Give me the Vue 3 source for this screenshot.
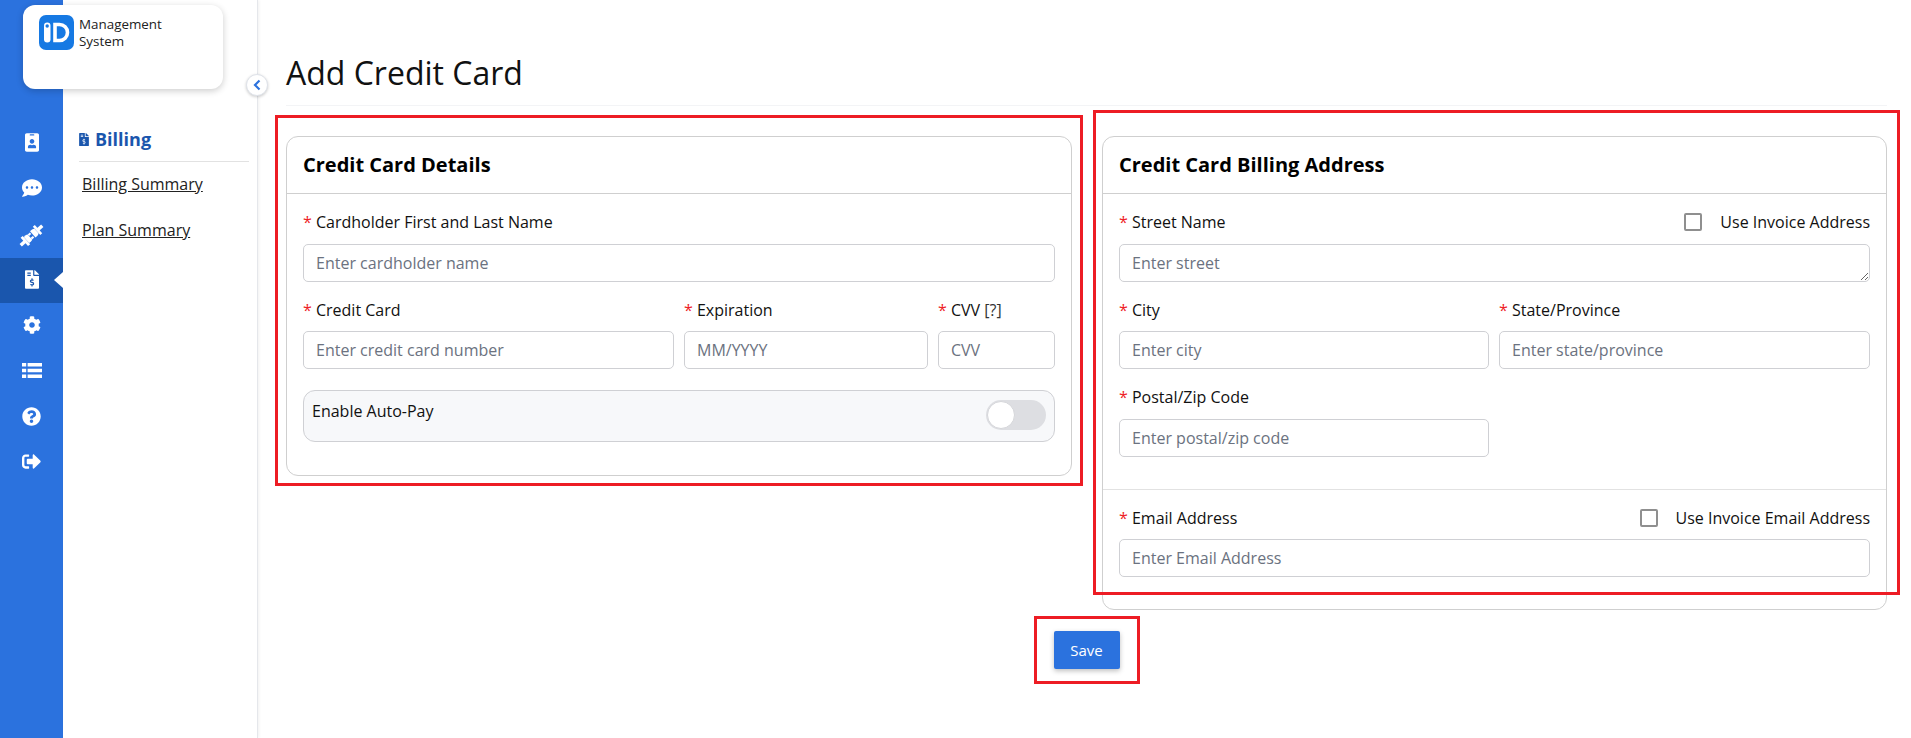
<script setup>
const fileDollar = 'M377 105L279.1 7c-4.5-4.5-10.6-7-17-7H256v128h128v-6.1c0-6.3-2.5-12.4-7-16.9zm-153 31V0H24C10.7 0 0 10.7 0 24v464c0 13.3 10.7 24 24 24h336c13.3 0 24-10.7 24-24V160H248c-13.2 0-24-10.8-24-24zM64 72c0-4.42 3.58-8 8-8h80c4.42 0 8 3.58 8 8v16c0 4.42-3.58 8-8 8H72c-4.42 0-8-3.58-8-8V72zm0 80v-16c0-4.42 3.58-8 8-8h80c4.42 0 8 3.58 8 8v16c0 4.42-3.58 8-8 8H72c-4.42 0-8-3.58-8-8zm144 263.88V440c0 4.42-3.58 8-8 8h-16c-4.42 0-8-3.58-8-8v-24.29c-11.29-.58-22.27-4.52-31.37-11.35-3.9-2.93-4.1-8.77-.57-12.14l11.75-11.21c2.77-2.64 6.89-2.76 10.13-.73 3.87 2.42 8.26 3.72 12.82 3.72h28.11c6.5 0 11.8-5.92 11.8-13.19 0-5.95-3.61-11.19-8.77-12.73l-45-13.5c-18.59-5.58-31.58-23.42-31.58-43.39 0-24.52 19.05-44.44 42.67-45.07V232c0-4.42 3.58-8 8-8h16c4.42 0 8 3.58 8 8v24.29c11.29.58 22.27 4.51 31.37 11.35 3.9 2.93 4.1 8.77.57 12.14l-11.75 11.21c-2.77 2.64-6.89 2.76-10.13.73-3.87-2.43-8.26-3.72-12.82-3.72h-28.11c-6.5 0-11.8 5.92-11.8 13.19 0 5.95 3.61 11.19 8.77 12.73l45 13.5c18.59 5.58 31.58 23.42 31.58 43.39 0 24.53-19.05 44.44-42.67 45.07z'

const navIcons = [
  { name: 'contacts', w: 14, h: 19, box: '0 0 384 512', d: 'M336 0H48C21.5 0 0 21.5 0 48v416c0 26.5 21.5 48 48 48h288c26.5 0 48-21.5 48-48V48c0-26.5-21.5-48-48-48zM144 32h96c8.8 0 16 7.2 16 16s-7.2 16-16 16h-96c-8.8 0-16-7.2-16-16s7.2-16 16-16zm48 128c35.3 0 64 28.7 64 64s-28.7 64-64 64-64-28.7-64-64 28.7-64 64-64zm112 236.8c0 10.6-10 19.2-22.4 19.2H102.4C90 416 80 407.4 80 396.8v-19.2c0-31.8 30.1-57.6 67.2-57.6h5c12.3 5.1 25.7 8 39.8 8s27.6-2.9 39.8-8h5c37.1 0 67.2 25.8 67.2 57.6v19.2z' },
  { name: 'messages', w: 20, h: 20, box: '0 0 512 512', d: 'M256 32C114.6 32 0 125.1 0 240c0 49.6 21.4 95 57 130.7C44.5 421.1 2.7 466 2.2 466.5c-2.2 2.3-2.8 5.7-1.5 8.7S4.8 480 8 480c66.3 0 116-31.8 140.6-51.4 32.7 12.3 69 19.4 107.4 19.4 141.4 0 256-93.1 256-208S397.4 32 256 32zM128 272c-17.7 0-32-14.3-32-32s14.3-32 32-32 32 14.3 32 32-14.3 32-32 32zm128 0c-17.7 0-32-14.3-32-32s14.3-32 32-32 32 14.3 32 32-14.3 32-32 32zm128 0c-17.7 0-32-14.3-32-32s14.3-32 32-32 32 14.3 32 32-14.3 32-32 32z' },
  { name: 'integrations', w: 29, h: 29, box: '0 0 24 24', plug: true },
  { name: 'billing', w: 14, h: 19, box: '0 0 384 512', d: fileDollar, active: true },
  { name: 'settings', w: 18, h: 18, box: '0 0 512 512', d: 'M487.4 315.7l-42.6-24.6c4.3-23.2 4.3-47 0-70.2l42.6-24.6c4.9-2.8 7.1-8.6 5.5-14-11.1-35.6-30-67.8-54.7-94.6-3.8-4.1-10-5.1-14.8-2.3L380.8 110c-17.9-15.4-38.5-27.3-60.8-35.1V25.8c0-5.6-3.9-10.5-9.4-11.7-36.7-8.2-74.3-7.8-109.2 0-5.5 1.2-9.4 6.1-9.4 11.7V75c-22.2 7.9-42.8 19.8-60.8 35.1L88.7 85.5c-4.9-2.8-11-1.9-14.8 2.3-24.7 26.7-43.6 58.9-54.7 94.6-1.7 5.4.6 11.2 5.5 14L67.3 221c-4.3 23.2-4.3 47 0 70.2l-42.6 24.6c-4.9 2.8-7.1 8.6-5.5 14 11.1 35.6 30 67.8 54.7 94.6 3.8 4.1 10 5.1 14.8 2.3l42.6-24.6c17.9 15.4 38.5 27.3 60.8 35.1v49.2c0 5.6 3.9 10.5 9.4 11.7 36.7 8.2 74.3 7.8 109.2 0 5.5-1.2 9.4-6.1 9.4-11.7v-49.2c22.2-7.9 42.8-19.8 60.8-35.1l42.6 24.6c4.9 2.8 11 1.9 14.8-2.3 24.7-26.7 43.6-58.9 54.7-94.6 1.5-5.5-.7-11.3-5.6-14.1zM256 336c-44.1 0-80-35.9-80-80s35.9-80 80-80 80 35.9 80 80-35.9 80-80 80z' },
  { name: 'lists', w: 20, h: 15, box: '0 0 20 15', d: 'M0 0H4.2V3.4H0zM5.6 0H20V3.4H5.6zM0 5.8H4.2V9.2H0zM5.6 5.8H20V9.2H5.6zM0 11.6H4.2V15H0zM5.6 11.6H20V15H5.6z' },
  { name: 'help', w: 19, h: 19, box: '0 0 512 512', d: 'M504 256c0 136.997-111.043 248-248 248S8 392.997 8 256C8 119.083 119.043 8 256 8s248 111.083 248 248zM262.655 90c-54.497 0-89.255 22.957-116.549 63.758-3.536 5.286-2.353 12.415 2.715 16.258l34.699 26.31c5.205 3.947 12.621 3.008 16.665-2.122 17.864-22.658 30.113-35.797 57.303-35.797 20.429 0 45.698 13.148 45.698 32.958 0 14.976-12.363 22.667-32.534 33.976C247.128 238.528 216 254.941 216 296v4c0 6.627 5.373 12 12 12h56c6.627 0 12-5.373 12-12v-1.333c0-28.462 83.186-29.647 83.186-106.667 0-58.002-60.165-102-116.531-102zM256 338c-25.365 0-46 20.635-46 46 0 25.364 20.635 46 46 46s46-20.636 46-46c0-25.365-20.635-46-46-46z' },
  { name: 'logout', w: 19, h: 19, box: '0 0 512 512', d: 'M497 273L329 441c-15 15-41 4.5-41-17v-96H152c-13.3 0-24-10.7-24-24v-96c0-13.3 10.7-24 24-24h136V88c0-21.4 25.9-32 41-17l168 168c9.3 9.4 9.3 24.6 0 34zM192 436v-40c0-6.6-5.4-12-12-12H96c-17.7 0-32-14.3-32-32V160c0-17.7 14.3-32 32-32h84c6.6 0 12-5.4 12-12V76c0-6.6-5.4-12-12-12H96c-53 0-96 43-96 96v192c0 53 43 96 96 96h84c6.6 0 12-5.4 12-12z' }
]
</script>

<template>
  <div class="page">
    <aside class="rail">
      <div v-for="item in navIcons" :key="item.name" class="rail-item" :class="{ active: item.active }">
        <svg :class="{ plug: item.plug }" :viewBox="item.box" :width="item.w" :height="item.h" fill="currentColor">
          <g v-if="item.plug" transform="rotate(-42 12 12)">
            <rect x="0" y="10.6" width="5" height="2.8" />
            <rect x="4" y="7.4" width="2.4" height="9.2" />
            <path d="M6.4 8.6h2.2a3 3 0 0 1 1.6.6v5.6a3 3 0 0 1-1.6.6H6.4z" />
            <rect x="10.2" y="9.3" width="2.4" height="1.7" />
            <rect x="10.2" y="13" width="2.4" height="1.7" />
            <path d="M13.4 8.6h2.2a3.4 3.4 0 0 1 2 .8v5.2a3.4 3.4 0 0 1-2 .8h-2.2z" />
            <rect x="17.6" y="7.4" width="2.2" height="9.2" />
            <rect x="19" y="10.6" width="5" height="2.8" />
          </g>
          <path v-else :d="item.d" />
        </svg>
      </div>
    </aside>

    <nav class="subnav">
      <div class="subnav-head">
        <svg viewBox="0 0 384 512" width="10" height="13" fill="currentColor"><path :d="fileDollar" /></svg>
        <span>Billing</span>
      </div>
      <a class="subnav-link">Billing Summary</a>
      <a class="subnav-link">Plan Summary</a>
    </nav>

    <main class="main">
      <h1 class="title">Add Credit Card</h1>

      <div class="cards">
        <section class="card">
          <h2 class="card-head">Credit Card Details</h2>
          <div class="card-body">
            <div class="field">
              <label class="label"><span><i>*</i> Cardholder First and Last Name</span></label>
              <input class="input" placeholder="Enter cardholder name" />
            </div>
            <div class="row row-card row-mid">
              <div class="field">
                <label class="label"><span><i>*</i> Credit Card</span></label>
                <input class="input" placeholder="Enter credit card number" />
              </div>
              <div class="field">
                <label class="label"><span><i>*</i> Expiration</span></label>
                <input class="input" placeholder="MM/YYYY" />
              </div>
              <div class="field">
                <label class="label"><span><i>*</i> CVV <b class="hint">[?]</b></span></label>
                <input class="input" placeholder="CVV" />
              </div>
            </div>
            <div class="autopay">
              <span class="autopay-text">Enable Auto-Pay</span>
              <span class="toggle"><span class="knob"></span></span>
            </div>
          </div>
        </section>

        <section class="card">
          <h2 class="card-head">Credit Card Billing Address</h2>
          <div class="card-body address">
            <div class="field">
              <label class="label">
                <span><i>*</i> Street Name</span>
                <span class="check"><span class="box"></span>Use Invoice Address</span>
              </label>
              <textarea class="input area" rows="1" placeholder="Enter street"></textarea>
            </div>
            <div class="row row-half row-mid">
              <div class="field">
                <label class="label"><span><i>*</i> City</span></label>
                <input class="input" placeholder="Enter city" />
              </div>
              <div class="field">
                <label class="label"><span><i>*</i> State/Province</span></label>
                <input class="input" placeholder="Enter state/province" />
              </div>
            </div>
            <div class="row row-half">
              <div class="field">
                <label class="label"><span><i>*</i> Postal/Zip Code</span></label>
                <input class="input" placeholder="Enter postal/zip code" />
              </div>
            </div>
          </div>
          <div class="card-body email">
            <div class="field">
              <label class="label">
                <span><i>*</i> Email Address</span>
                <span class="check"><span class="box"></span>Use Invoice Email Address</span>
              </label>
              <input class="input" placeholder="Enter Email Address" />
            </div>
          </div>
        </section>
      </div>

      <div class="actions">
        <button class="save" type="button">Save</button>
      </div>
    </main>

    <div class="logo-card">
      <svg class="logo" viewBox="0 0 35 35" width="35" height="35">
        <rect width="35" height="35" rx="7" fill="#1679e3" />
        <rect x="5" y="7.5" width="6.5" height="20" rx="3.25" fill="#fff" />
        <circle cx="8.2" cy="11" r="1.7" fill="#1679e3" />
        <path d="M16 9.5h4.5a8 8 0 0 1 0 16H16z" fill="none" stroke="#fff" stroke-width="3.6" />
      </svg>
      <span class="logo-text">Management<br />System</span>
    </div>

    <button class="collapse" type="button" aria-label="Collapse">
      <svg viewBox="0 0 10 12" width="10" height="12" fill="none" stroke="#2b72de" stroke-width="2.2"><path d="M7.5 1.5 3 6l4.5 4.5" /></svg>
    </button>

    <div class="mark mark-a"></div>
    <div class="mark mark-b"></div>
    <div class="mark mark-c"></div>
  </div>
</template>

<style>
html, body { margin: 0; background: #fff; overflow: hidden; }
</style>

<style scoped>
.page {
  position: relative;
  display: flex;
  width: 1911px;
  height: 738px;
  overflow: hidden;
  background: #fff;
  color: #111827;
  font-family: "Open Sans", "Noto Sans", sans-serif;
  font-size: 14px;
}
.rail {
  flex: 0 0 63px;
  padding-top: 121px;
  box-sizing: border-box;
  background: #2b72de;
  color: #fff;
}
.rail-item {
  position: relative;
  display: flex;
  align-items: center;
  justify-content: center;
  height: 45.6px;
  padding-bottom: 2px;
  box-sizing: border-box;
}
.rail-item.active { background: #1a56ad; }
.rail-item.active::after {
  content: "";
  position: absolute;
  right: 0;
  top: 14px;
  border-style: solid;
  border-width: 8px 9px 8px 0;
  border-color: transparent #fff transparent transparent;
}
.plug { margin-top: 4px; }
.subnav {
  flex: 0 0 195px;
  box-sizing: border-box;
  padding: 125px 8px 0 16px;
  border-right: 1px solid #e5e7eb;
  box-shadow: 1px 0 3px rgba(0, 0, 0, 0.06);
}
.subnav-head {
  display: flex;
  align-items: center;
  gap: 6px;
  height: 37px;
  padding-bottom: 8px;
  box-sizing: border-box;
  border-bottom: 1px solid #e2e2e2;
  color: #1a56ad;
  font-size: 18px;
  font-weight: 700;
}
.subnav-link {
  display: block;
  height: 46px;
  line-height: 44px;
  padding-left: 3px;
  color: #222;
  font-size: 16px;
  text-decoration: underline;
}
.main {
  flex: 1;
  min-width: 0;
  padding: 0 24px 0 28px;
}
.title {
  margin: 0 0 30px;
  height: 106px;
  box-sizing: border-box;
  padding-top: 50px;
  border-bottom: 1px solid #f3f4f6;
  color: #111;
  font-size: 32px;
  font-weight: 400;
  line-height: 46px;
}
.cards {
  display: grid;
  grid-template-columns: 786px 785px;
  gap: 30px;
  align-items: start;
}
.card {
  box-sizing: border-box;
  border: 1px solid #cfcfcf;
  border-radius: 12px;
  background: #fff;
}
.card-head {
  margin: 0;
  height: 57px;
  box-sizing: border-box;
  padding: 0 16px;
  border-bottom: 1px solid #cfcfcf;
  color: #000;
  font-size: 20px;
  font-weight: 700;
  line-height: 56px;
}
.card-body {
  display: flex;
  flex-direction: column;
  gap: 16.9px;
  padding: 17px 16px 33px;
}
.card-body.address {
  padding-bottom: 32.4px;
}
.card-body.email {
  padding: 17px 16px 32px;
  border-top: 1px solid #e2e2e2;
}
.field {
  display: flex;
  flex-direction: column;
  gap: 10.6px;
  min-width: 0;
}
.email .field { gap: 10px; }
.row-mid { padding-top: 0.5px; }
.row-mid .field { gap: 10.1px; }
.label {
  display: flex;
  align-items: center;
  justify-content: space-between;
  height: 22px;
  color: #111;
  font-size: 16px;
  line-height: 20px;
}
.label i {
  color: #ee1c25;
  font-style: normal;
}
.hint {
  color: #333;
  font-weight: 400;
}
.input {
  display: block;
  width: 100%;
  height: 38px;
  box-sizing: border-box;
  margin: 0;
  padding: 0 12px;
  border: 1px solid #cfd0d4;
  border-radius: 5px;
  background: #fff;
  color: #111;
  font-family: inherit;
  font-size: 16px;
  outline: none;
}
.input::placeholder {
  color: #6b7280;
  opacity: 1;
}
.area {
  padding-top: 7px;
  line-height: 22px;
  resize: vertical;
}
.row {
  display: grid;
  column-gap: 10px;
}
.row-card { grid-template-columns: 371px 244px 1fr; }
.row-half { grid-template-columns: 370px 1fr; }
.autopay {
  display: flex;
  justify-content: space-between;
  height: 52px;
  box-sizing: border-box;
  margin-top: 4px;
  padding: 9px 8px 0;
  border: 1px solid #cfd0d4;
  border-radius: 12px;
  background: #f7f8fa;
  font-size: 16px;
}
.autopay-text { line-height: 22px; color: #111; }
.toggle {
  position: relative;
  display: block;
  width: 60px;
  height: 30px;
  border-radius: 15px;
  background: #dddee2;
}
.knob {
  position: absolute;
  left: 1px;
  top: 1px;
  width: 26px;
  height: 26px;
  border: 1px solid #d5d6da;
  border-radius: 50%;
  background: #fff;
}
.check {
  display: flex;
  align-items: center;
}
.box {
  width: 18px;
  height: 18px;
  box-sizing: border-box;
  margin-right: 18px;
  border: 2px solid #8f8f8f;
  border-radius: 2px;
  background: #fff;
}
.actions {
  display: flex;
  justify-content: center;
  margin-top: 21px;
}
.save {
  width: 66px;
  height: 38px;
  border: 0;
  border-radius: 2px;
  background: #2b72de;
  box-shadow: 0 2px 5px rgba(0, 0, 0, 0.25);
  color: #fff;
  font-family: inherit;
  font-size: 15px;
}
.logo-card {
  position: absolute;
  left: 23px;
  top: 5px;
  width: 200px;
  height: 84px;
  border-radius: 12px;
  background: #fff;
  box-shadow: 0 2px 7px rgba(0, 0, 0, 0.2);
}
.logo {
  position: absolute;
  left: 16px;
  top: 10px;
}
.logo-text {
  position: absolute;
  left: 56px;
  top: 11px;
  color: #222;
  font-size: 13.4px;
  line-height: 17px;
}
.collapse {
  position: absolute;
  left: 246px;
  top: 74px;
  display: flex;
  align-items: center;
  justify-content: center;
  width: 22px;
  height: 22px;
  padding: 0;
  border: 1px solid #dfe3ea;
  border-radius: 50%;
  background: #fff;
  box-shadow: 0 1px 3px rgba(0, 0, 0, 0.2);
}
.mark {
  position: absolute;
  box-sizing: border-box;
  border: 3px solid #ed1c24;
  pointer-events: none;
}
.mark-a { left: 275px; top: 115px; width: 808px; height: 371px; }
.mark-b { left: 1093px; top: 110px; width: 807px; height: 485px; }
.mark-c { left: 1034px; top: 616px; width: 106px; height: 68px; }
</style>
